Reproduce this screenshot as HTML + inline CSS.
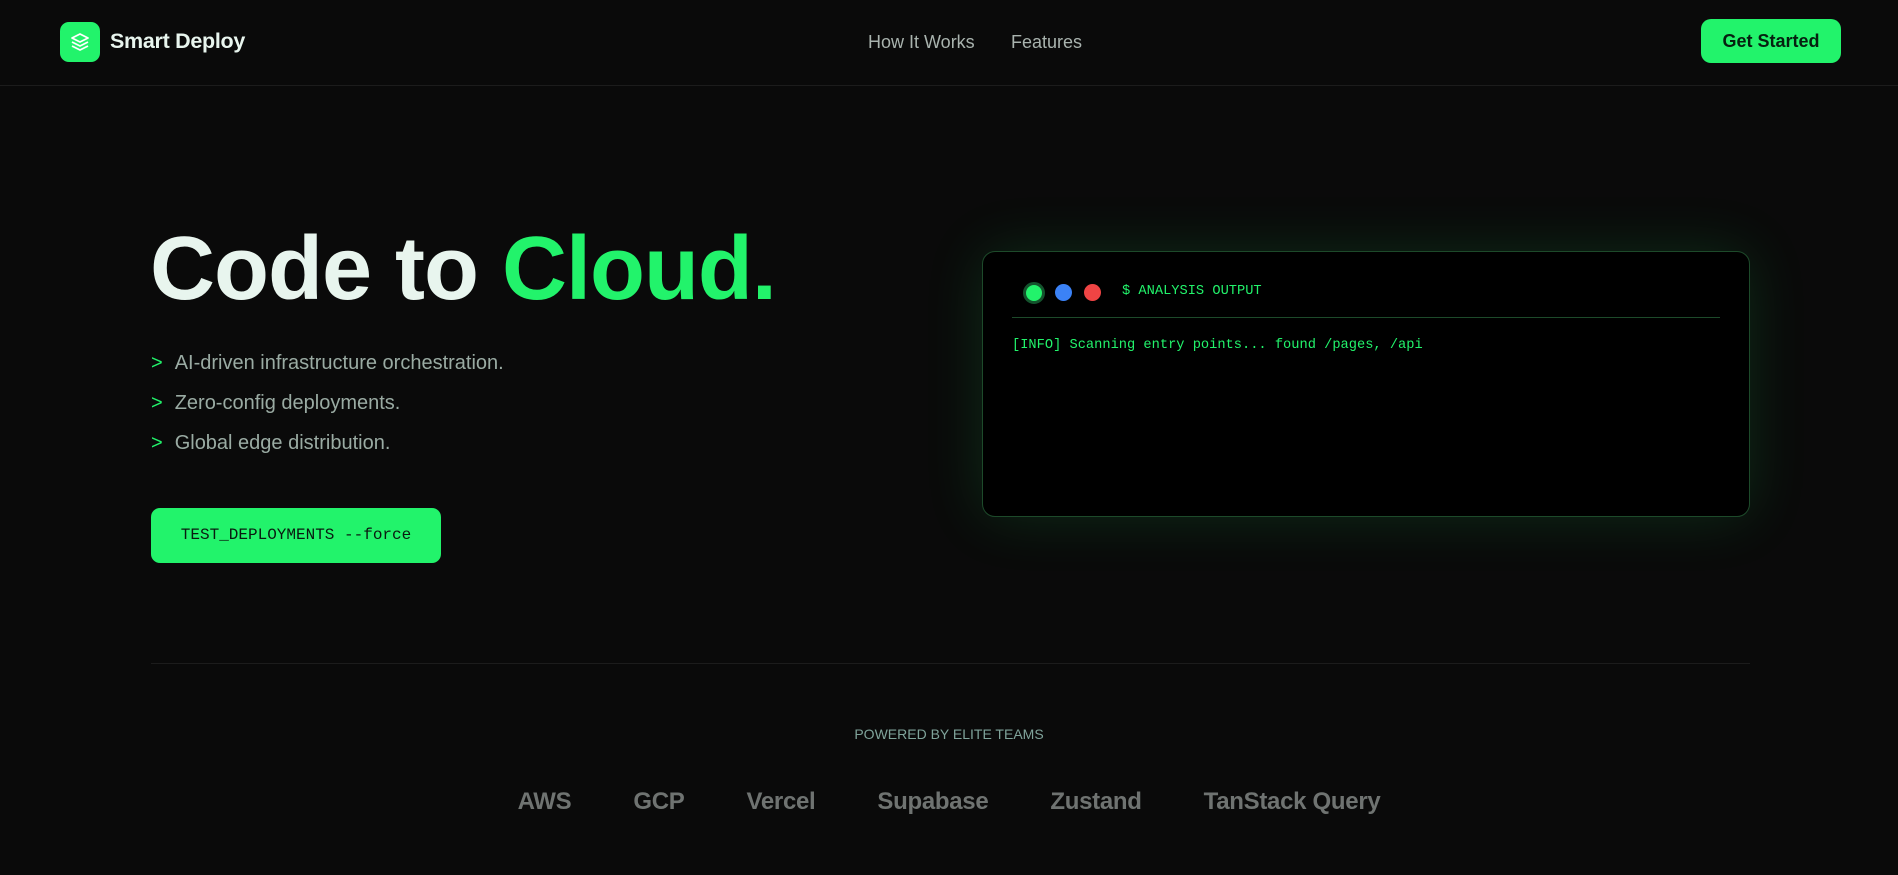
<!DOCTYPE html>
<html><head><meta charset="utf-8"><style>
*{margin:0;padding:0;box-sizing:border-box}
body{width:1898px;height:875px;background:#0a0a0a;font-family:"Liberation Sans",sans-serif;position:relative;overflow:hidden;color:#e8f5ee}
.abs{position:absolute}
.mono{font-family:"Liberation Mono",monospace}
</style></head><body>
<div class="abs" style="left:0;top:85px;width:1898px;height:1px;background:#1c1c1c"></div>
<div class="abs" style="left:60px;top:22px;width:40px;height:40px;border-radius:9px;background:#22f36b">
<svg width="40" height="40" viewBox="0 0 40 40" fill="none" stroke="#fff" stroke-width="1.8" stroke-linejoin="round"><path d="M20 12l-8 4 8 4 8-4z"/><path d="M12 20l8 4 8-4"/><path d="M12 24l8 4 8-4"/></svg></div>
<div class="abs" style="left:110px;top:29px;font-size:21.5px;font-weight:bold;color:#e8f5ee;letter-spacing:-0.3px">Smart Deploy</div>
<div class="abs" style="left:868px;top:32px;font-size:18px;color:#a9b3ae">How It Works</div>
<div class="abs" style="left:1011px;top:32px;font-size:18px;color:#a9b3ae">Features</div>
<div class="abs" style="left:1701px;top:19px;width:140px;height:44px;border-radius:10px;background:#22f36b;color:#062010;font-size:18px;font-weight:bold;text-align:center;line-height:44px">Get Started</div>

<div class="abs" style="left:150px;top:220px;font-size:90px;font-weight:bold;letter-spacing:-1px;line-height:1.1;color:#e8f5ee">Code to <span style="color:#22f36b">Cloud.</span></div>
<div class="abs" style="left:151px;top:343px;font-size:20px;color:#9aaba3;line-height:40px">
<div><span style="color:#22f36b;margin-right:12px">&gt;</span>AI-driven infrastructure orchestration.</div>
<div><span style="color:#22f36b;margin-right:12px">&gt;</span>Zero-config deployments.</div>
<div><span style="color:#22f36b;margin-right:12px">&gt;</span>Global edge distribution.</div>
</div>
<div class="abs mono" style="left:151px;top:508px;width:290px;height:55px;border-radius:9px;background:#22f36b;color:#0a1a10;font-size:16px;text-align:center;line-height:55px">TEST_DEPLOYMENTS --force</div>

<div class="abs" style="left:982px;top:251px;width:768px;height:266px;border-radius:13px;background:#000;border:1px solid #1d4a2a;box-shadow:0 0 60px rgba(34,243,107,0.14)">
<div class="abs" style="left:40px;top:30px;width:22px;height:22px;border-radius:50%;background:#22f36b;border:3px solid #14532d"></div>
<div class="abs" style="left:72px;top:32px;width:17px;height:17px;border-radius:50%;background:#3b82f6"></div>
<div class="abs" style="left:101px;top:32px;width:17px;height:17px;border-radius:50%;background:#ef4444"></div>
<div class="abs mono" style="left:139px;top:32px;font-size:13.7px;color:#22f36b">$ ANALYSIS OUTPUT</div>
<div class="abs" style="left:29px;top:65px;width:708px;height:1px;background:#1d4a2a"></div>
<div class="abs mono" style="left:29px;top:86px;font-size:13.7px;color:#22f36b">[INFO] Scanning entry points... found /pages, /api</div>
</div>

<div class="abs" style="left:151px;top:663px;width:1599px;height:1px;background:#1c1c1c"></div>
<div class="abs" style="left:0;top:726px;width:1898px;text-align:center;font-size:14px;color:#7fa39a">POWERED BY ELITE TEAMS</div>
<div class="abs" style="left:0;top:788px;width:1898px;display:flex;justify-content:center;gap:62px;font-size:24px;font-weight:bold;color:#6f7371;letter-spacing:-0.3px">
<span>AWS</span><span>GCP</span><span>Vercel</span><span>Supabase</span><span>Zustand</span><span>TanStack Query</span></div>
</body></html>
